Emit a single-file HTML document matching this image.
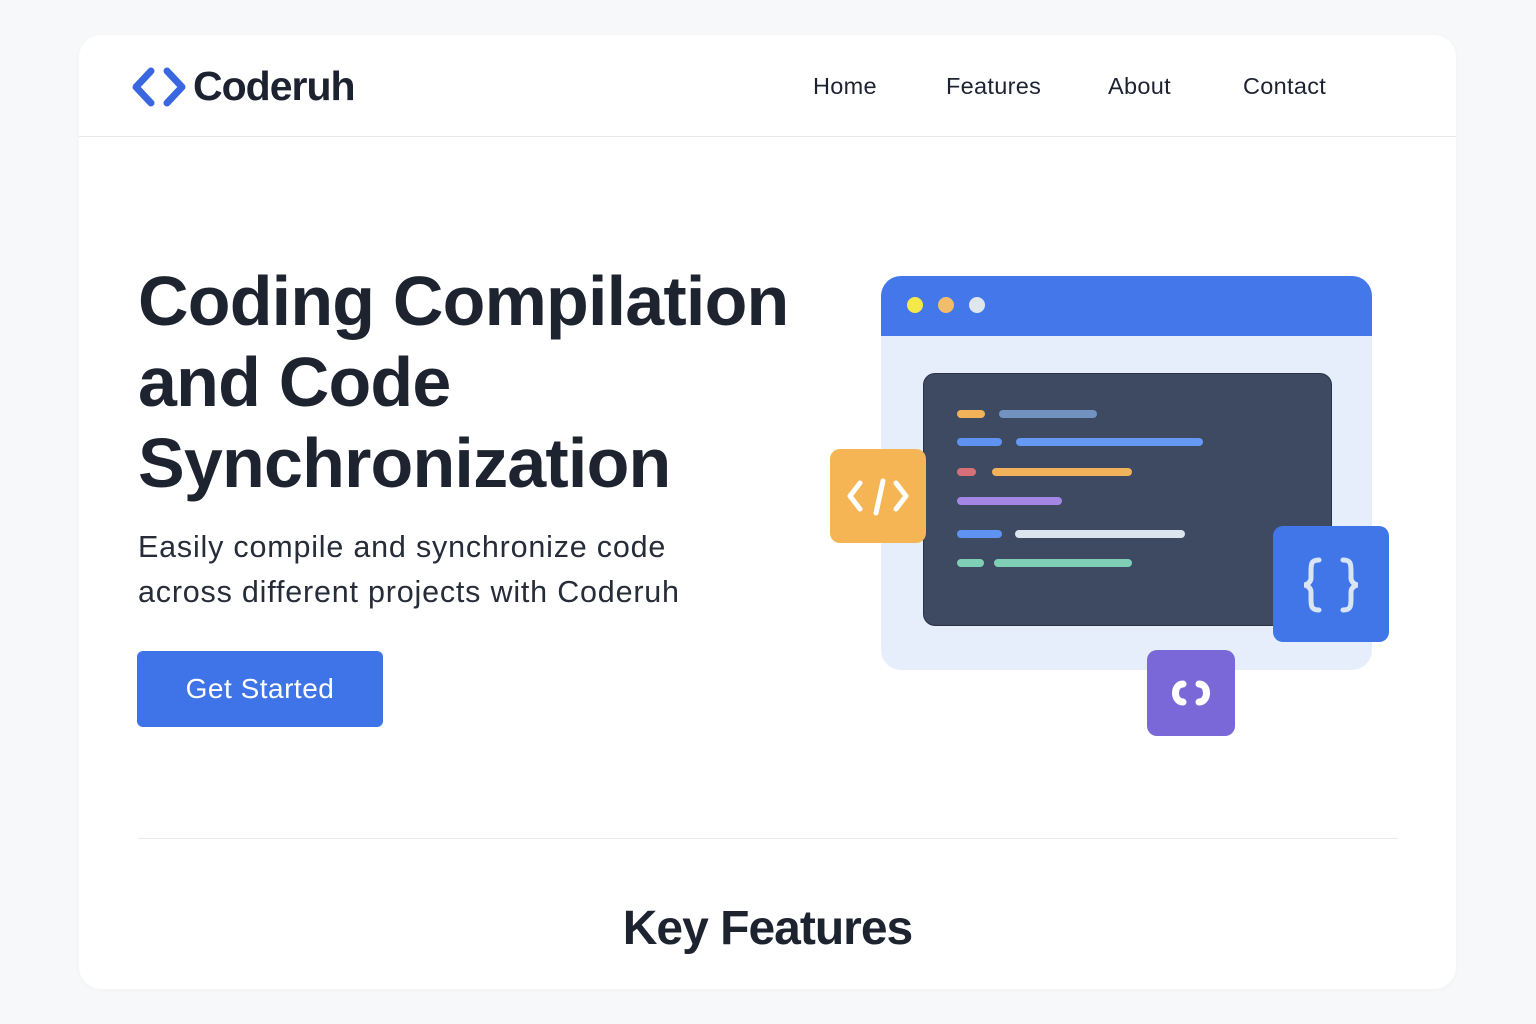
<!DOCTYPE html>
<html><head><meta charset="utf-8"><style>
*{margin:0;padding:0;box-sizing:border-box}
body{width:1536px;height:1024px;background:#f7f8fa;font-family:"Liberation Sans",sans-serif;position:relative;overflow:hidden;color:#1c2230}
.card{position:absolute;left:79px;top:35px;width:1377px;height:954px;background:#fff;border-radius:22px;box-shadow:0 1px 6px rgba(0,0,0,.03)}
.nav{position:absolute;left:0;top:0;width:100%;height:102px;border-bottom:1px solid #e8eaee}
.logo{position:absolute;left:52px;top:28px;display:flex;align-items:center}
.logo span{font-size:41px;font-weight:bold;letter-spacing:-1px;color:#1c2230;margin-left:6px}
.links a{position:absolute;top:38px;font-size:23.5px;letter-spacing:.3px;color:#1c2230;text-decoration:none}
h1{position:absolute;left:59px;top:226px;font-size:70px;line-height:81px;font-weight:bold;letter-spacing:-0.8px;color:#1e2330}
.sub{position:absolute;left:59px;top:490px;font-size:30.5px;line-height:45px;letter-spacing:0.8px;color:#262c38}
.btn{position:absolute;left:58px;top:616px;width:246px;height:76px;background:#3e74e8;border-radius:6px;color:#fff;font-size:28px;letter-spacing:.5px;display:flex;align-items:center;justify-content:center}
.div{position:absolute;left:59px;top:803px;width:1260px;height:1px;background:#e8eaee}
h2{position:absolute;left:0;width:100%;text-align:center;top:866px;font-size:48px;font-weight:bold;letter-spacing:-1px;color:#1e2330}
.abs{position:absolute}
.bar{position:absolute;height:8px;border-radius:4px}
</style></head><body>
<div class="card">
<div class="nav">
<div class="logo"><svg width="56" height="44" viewBox="0 0 56 44"><path d="M20 6 L5 22 L20 38 M36 6 L51 22 L36 38" stroke="#3a67e0" stroke-width="7" fill="none" stroke-linecap="round" stroke-linejoin="round"/></svg><span>Coderuh</span></div>
<div class="links"><a style="left:734px">Home</a><a style="left:867px">Features</a><a style="left:1029px">About</a><a style="left:1164px">Contact</a></div>
</div>
<h1>Coding Compilation<br>and Code<br>Synchronization</h1>
<div class="sub">Easily compile and synchronize code<br>across different projects with Coderuh</div>
<div class="btn">Get Started</div>
<div class="div"></div>
<h2>Key Features</h2>
</div>
<div class="abs" style="left:881px;top:276px;width:491px;height:394px;background:#e7eefb;border-radius:20px;overflow:hidden">
<div style="height:60px;background:#4477ea"></div>
</div>
<div class="abs" style="left:907px;top:297px;width:16px;height:16px;border-radius:50%;background:#f5e94a"></div>
<div class="abs" style="left:938px;top:297px;width:16px;height:16px;border-radius:50%;background:#f2bd6a"></div>
<div class="abs" style="left:969px;top:297px;width:16px;height:16px;border-radius:50%;background:#dfe6ee"></div>
<div class="abs" style="left:923px;top:373px;width:409px;height:253px;background:#3d4a62;border-radius:12px;border:1px solid #2a3346"></div>
<div class="bar" style="left:957px;top:410px;width:28px;background:#f2b25a"></div>
<div class="bar" style="left:999px;top:410px;width:98px;background:#7293c0"></div>
<div class="bar" style="left:957px;top:438px;width:45px;background:#5f93f2"></div>
<div class="bar" style="left:1016px;top:438px;width:187px;background:#6699f4"></div>
<div class="bar" style="left:957px;top:468px;width:19px;background:#d66f78"></div>
<div class="bar" style="left:992px;top:468px;width:140px;background:#f2b25a"></div>
<div class="bar" style="left:957px;top:497px;width:105px;background:#a486e4"></div>
<div class="bar" style="left:957px;top:530px;width:45px;background:#5f93f2"></div>
<div class="bar" style="left:1015px;top:530px;width:170px;background:#dce6ef"></div>
<div class="bar" style="left:957px;top:559px;width:27px;background:#7ecfb6"></div>
<div class="bar" style="left:994px;top:559px;width:138px;background:#7ecfb6"></div>
<div class="abs" style="left:830px;top:449px;width:96px;height:94px;background:#f5b554;border-radius:10px">
<svg width="96" height="94" viewBox="0 0 96 94"><path d="M30 34 L20 47 L30 60 M66 34 L76 47 L66 60 M53 32 L46 64" stroke="#fff" stroke-width="5" fill="none" stroke-linecap="round" stroke-linejoin="round"/></svg></div>
<div class="abs" style="left:1273px;top:526px;width:116px;height:116px;background:#4076e8;border-radius:10px">
<svg width="116" height="116" viewBox="0 0 116 116"><path d="M46 34 C38 34 38 38 38 46 L38 52 C38 56 34 59 31 59 C34 59 38 62 38 66 L38 72 C38 80 38 84 46 84 M70 34 C78 34 78 38 78 46 L78 52 C78 56 82 59 85 59 C82 59 78 62 78 66 L78 72 C78 80 78 84 70 84" stroke="#d9e4f7" stroke-width="5" fill="none" stroke-linecap="round"/></svg></div>
<div class="abs" style="left:1147px;top:650px;width:88px;height:86px;background:#7a68d8;border-radius:10px">
<svg width="88" height="86" viewBox="0 0 88 86"><path d="M36 34 C26 34 26 52 36 52 M52 34 C62 34 62 52 52 52" stroke="#fff" stroke-width="7" fill="none" stroke-linecap="round"/></svg></div>
</body></html>
